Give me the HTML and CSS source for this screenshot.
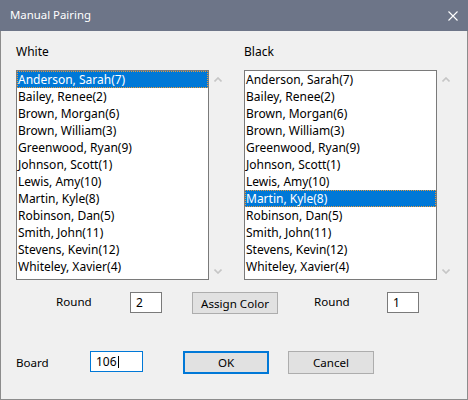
FILE: index.html
```html
<!DOCTYPE html>
<html>
<head>
<meta charset="utf-8">
<link rel="stylesheet" href="styles.css">
</head>
<body>
<div class="window">
  <div class="titlebar">
    <span class="title">Manual Pairing</span>
    <svg class="close" width="10" height="10" viewBox="0 0 10 10"><path d="M0.5 0.5 L9.5 9.5 M9.5 0.5 L0.5 9.5" stroke="#fff" stroke-width="1.1" fill="none"/></svg>
  </div>
  <div class="content">
    <div class="labels">
      <span class="lab-white">White</span>
      <span class="lab-black">Black</span>
    </div>
    <div class="lists">
      <div class="listcol">
        <ul class="listbox">
          <li class="sel">Anderson, Sarah(7)</li>
          <li>Bailey, Renee(2)</li>
          <li>Brown, Morgan(6)</li>
          <li>Brown, William(3)</li>
          <li>Greenwood, Ryan(9)</li>
          <li>Johnson, Scott(1)</li>
          <li>Lewis, Amy(10)</li>
          <li>Martin, Kyle(8)</li>
          <li>Robinson, Dan(5)</li>
          <li>Smith, John(11)</li>
          <li>Stevens, Kevin(12)</li>
          <li>Whiteley, Xavier(4)</li>
        </ul>
        <div class="scroll">
          <svg width="8" height="5" viewBox="0 0 8 5"><polyline points="0.5,4.5 4,1 7.5,4.5" stroke="#c6c6c6" stroke-width="1.6" fill="none"/></svg>
          <svg width="8" height="5" viewBox="0 0 8 5"><polyline points="0.5,0.5 4,4 7.5,0.5" stroke="#c6c6c6" stroke-width="1.6" fill="none"/></svg>
        </div>
      </div>
      <div class="listcol">
        <ul class="listbox">
          <li>Anderson, Sarah(7)</li>
          <li>Bailey, Renee(2)</li>
          <li>Brown, Morgan(6)</li>
          <li>Brown, William(3)</li>
          <li>Greenwood, Ryan(9)</li>
          <li>Johnson, Scott(1)</li>
          <li>Lewis, Amy(10)</li>
          <li class="sel">Martin, Kyle(8)</li>
          <li>Robinson, Dan(5)</li>
          <li>Smith, John(11)</li>
          <li>Stevens, Kevin(12)</li>
          <li>Whiteley, Xavier(4)</li>
        </ul>
        <div class="scroll">
          <svg width="8" height="5" viewBox="0 0 8 5"><polyline points="0.5,4.5 4,1 7.5,4.5" stroke="#c6c6c6" stroke-width="1.6" fill="none"/></svg>
          <svg width="8" height="5" viewBox="0 0 8 5"><polyline points="0.5,0.5 4,4 7.5,0.5" stroke="#c6c6c6" stroke-width="1.6" fill="none"/></svg>
        </div>
      </div>
    </div>
    <div class="row1">
      <span class="lbl round1">Round</span>
      <span class="field small">2</span>
      <span class="btn assign">Assign Color</span>
      <span class="lbl round2">Round</span>
      <span class="field small">1</span>
    </div>
    <div class="row2">
      <span class="lbl board">Board</span>
      <span class="field focus">106<span class="caret"></span></span>
      <span class="btn ok">OK</span>
      <span class="btn cancel">Cancel</span>
    </div>
  </div>
</div>
</body>
</html>
```

FILE: styles.css
```css
html, body {
  margin: 0;
  padding: 0;
}
body {
  width: 468px;
  height: 400px;
  overflow: hidden;
  font-family: "Noto Sans", "Open Sans", sans-serif;
  font-size: 12px;
  color: #000;
  background: #f0f0f0;
}
.window {
  width: 468px;
  height: 400px;
  display: flex;
  flex-direction: column;
}
.titlebar {
  height: 31px;
  background: #6d7588;
  display: flex;
  align-items: center;
  justify-content: space-between;
  padding: 0 10px 0 10px;
  box-sizing: border-box;
  flex: none;
}
.title {
  color: #fff;
  font-size: 11.4px;
  line-height: 16px;
  margin-top: -1px;
}
.close {
  display: block;
}
.content {
  flex: 1;
  background: #f0f0f0;
  border: 1px solid #8c8c8c;
  border-top: none;
  box-sizing: border-box;
}
.labels {
  display: flex;
  margin-top: 13px;
  padding-left: 15px;
  height: 16px;
  line-height: 16px;
}
.lab-white {
  width: 228px;
}
.lists {
  display: flex;
  gap: 18px;
  margin-top: 10px;
  padding-left: 15px;
}
.listcol {
  display: flex;
}
.listbox {
  list-style: none;
  margin: 0;
  padding: 0;
  width: 193px;
  height: 210px;
  box-sizing: border-box;
  border: 1px solid #7a7a7a;
  background: #fff;
}
.listbox li {
  height: 17px;
  line-height: 17px;
  padding-left: 1px;
  white-space: nowrap;
  box-sizing: border-box;
}
.listbox li.sel {
  background: #0078d7;
  color: #fff;
  outline: 1px dotted #e89a3c;
  outline-offset: -1px;
}
.scroll {
  width: 17px;
  height: 210px;
  display: flex;
  flex-direction: column;
  align-items: center;
  justify-content: space-between;
  padding: 7px 0 6px;
  box-sizing: border-box;
}
.scroll svg {
  display: block;
}
.row1, .row2 {
  font-size: 11.6px;
}
.row1 {
  display: flex;
  align-items: center;
  margin-top: 12px;
  padding-left: 55px;
  height: 22px;
}
.row2 {
  display: flex;
  align-items: center;
  margin-top: 37px;
  padding-left: 15px;
  height: 23px;
}
.lbl {
  line-height: 16px;
}
.round1 { width: 74px; margin-top: -2px; }
.round2 { width: 73px; margin-top: -2px; }
.board { width: 74px; }
.field {
  box-sizing: border-box;
  height: 21px;
  border: 1px solid #7a7a7a;
  background: #fff;
  padding-left: 5px;
  line-height: 19px;
  display: flex;
  align-items: center;
  font-size: 12px;
}
.field.small {
  width: 32px;
  align-self: flex-start;
}
.field.focus {
  width: 53px;
  border-color: #0078d7;
  align-self: flex-start;
}
.caret {
  display: inline-block;
  width: 1px;
  height: 12px;
  background: #000;
  margin-left: 1px;
}
.btn {
  box-sizing: border-box;
  width: 86px;
  background: #e1e1e1;
  border: 1px solid #adadad;
  display: flex;
  align-items: center;
  justify-content: center;
}
.assign {
  height: 22px;
  margin-left: 30px;
  margin-right: 36px;
}
.ok {
  height: 23px;
  margin-left: 40px;
  border: 2px solid #0078d7;
}
.cancel {
  height: 23px;
  margin-left: 19px;
}
```
